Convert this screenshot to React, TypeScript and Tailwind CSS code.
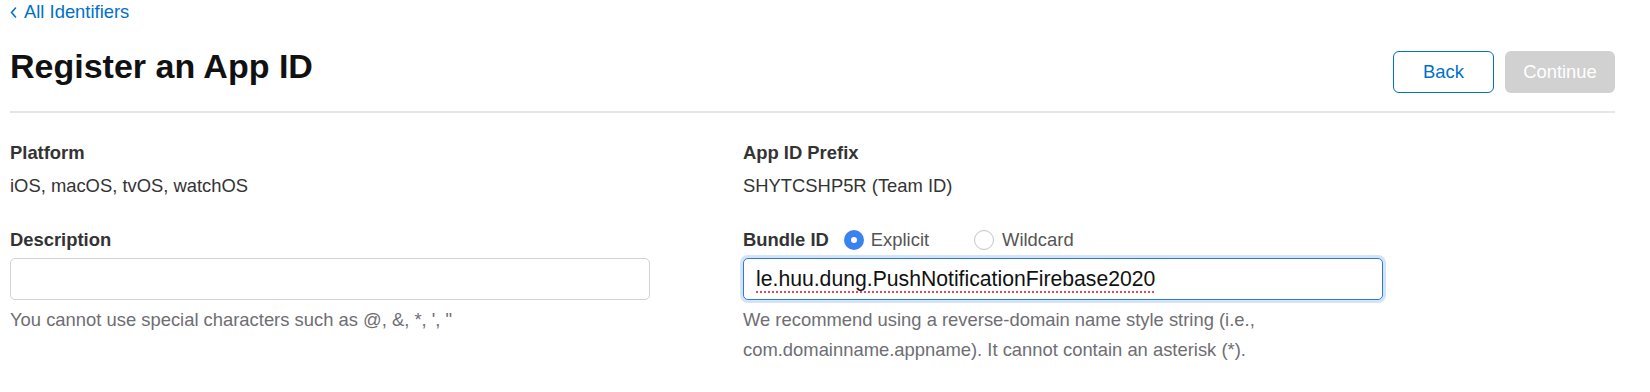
export default function App() {
  return (
    <div className="min-h-screen bg-white pl-[10px] pr-[35px] text-[18.4px] text-[#333] [font-family:'Liberation_Sans',Arial,sans-serif]">
      {/* back link */}
      <a href="#" className="flex h-6 items-center gap-[7px] leading-6 text-[#0070c9]">
        <svg width="7" height="11" viewBox="0 0 7 11" fill="none">
          <path d="M5.5 1 L1.5 5.5 L5.5 10" stroke="currentColor" strokeWidth="1.6" strokeLinecap="round" strokeLinejoin="round" />
        </svg>
        <span>All Identifiers</span>
      </a>

      {/* header */}
      <div className="mt-5 flex items-start justify-between border-b-2 border-[#e6e6e6] pb-[18px]">
        <h1 className="text-[34px] font-bold leading-[44px] text-[#111]">Register an App ID</h1>
        <div className="mt-[7px] flex gap-[11px]">
          <button className="h-[42px] w-[101px] rounded-[6px] border border-[#0070c9] bg-white text-[#0070c9]">
            Back
          </button>
          <button className="h-[42px] w-[110px] rounded-[6px] bg-[#d1d1d1] text-white">
            Continue
          </button>
        </div>
      </div>

      {/* form */}
      <div className="grid grid-cols-[733px_1fr] pt-7">
        <div className="flex flex-col">
          <div className="font-bold leading-6 text-[#333]">Platform</div>
          <div className="mt-[9px] leading-6">iOS, macOS, tvOS, watchOS</div>
          <div className="mt-[30px] font-bold leading-6">Description</div>
          <div className="mt-[6px] h-[42px] w-[640px] rounded-[5px] border border-[#d2d2d7] bg-white" />
          <p className="mt-[5px] leading-[30px] text-[#6e6e73]">You cannot use special characters such as @, &amp;, *, ', "</p>
        </div>

        <div className="flex flex-col">
          <div className="font-bold leading-6">App ID Prefix</div>
          <div className="mt-[9px] leading-6">SHYTCSHP5R (Team ID)</div>
          <div className="mt-[30px] flex h-6 items-center">
            <span className="font-bold">Bundle ID</span>
            <label className="ml-[15px] flex items-center gap-[7px] text-[#555]">
              <span className="flex h-5 w-5 items-center justify-center rounded-full bg-[#3b82f0]">
                <span className="h-[6px] w-[6px] rounded-full bg-white" />
              </span>
              Explicit
            </label>
            <label className="ml-[45px] flex items-center gap-[8px] text-[#555]">
              <span className="h-5 w-5 rounded-full border border-[#c4c4c4] bg-white" />
              Wildcard
            </label>
          </div>
          <div className="mt-[6px] flex h-[42px] w-[640px] items-center rounded-[5px] border-[1.5px] border-[#2f7ad8] bg-white px-[12px] shadow-[0_0_0_3px_#d4e4f7]">
            <span className="text-[21.2px] text-[#111] underline decoration-[#e5484d] decoration-dotted decoration-2 underline-offset-[5px]">
              le.huu.dung.PushNotificationFirebase2020
            </span>
          </div>
          <p className="mt-[5px] w-[560px] leading-[30px] text-[#6e6e73]">
            We recommend using a reverse-domain name style string (i.e., com.domainname.appname). It cannot contain an asterisk (*).
          </p>
        </div>
      </div>
    </div>
  );
}
